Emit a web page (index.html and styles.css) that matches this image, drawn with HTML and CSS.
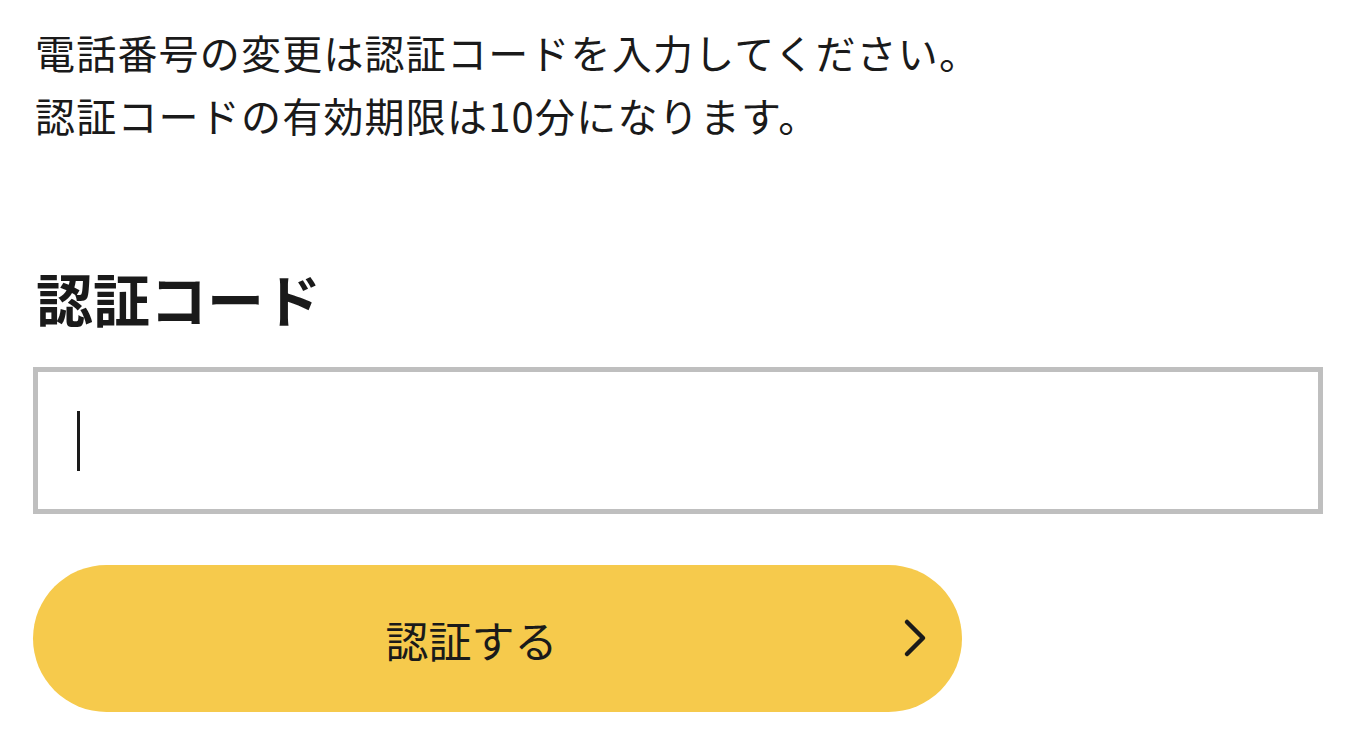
FILE: index.html
```html
<!DOCTYPE html>
<html lang="ja">
<head>
<meta charset="utf-8">
<link rel="stylesheet" href="styles.css">
</head>
<body>
<main class="page">
  <p class="lead">電話番号の変更は認証コードを入力してください。<br>認証コードの有効期限は10分になります。</p>
  <h2 class="label">認証コード</h2>
  <div class="field"><span class="caret"></span></div>
  <button class="submit" type="button">
    <span class="submit-text">認証する</span>
    <svg class="chev" width="28" height="40" viewBox="0 0 28 40"><path d="M6 4 L22 20 L6 36" fill="none" stroke="#1a1a1a" stroke-width="4.5" stroke-linecap="round" stroke-linejoin="round"/></svg>
  </button>
</main>
</body>
</html>
```
FILE: styles.css
```css
html, body { margin: 0; padding: 0; background: #fff; }
body {
  font-family: "Noto Sans CJK JP", "Noto Sans", sans-serif;
  color: #1a1a1a;
}
.page {
  padding: 21px 33px 0 33px;
  display: flex;
  flex-direction: column;
  align-items: flex-start;
}
.lead {
  margin: 0 0 0 2px;
  font-size: 40px;
  line-height: 63px;
  letter-spacing: 1.2px;
}
.label {
  margin: 110px 0 0 3px;
  font-size: 57px;
  font-weight: 700;
  line-height: 80px;
}
.field {
  margin-top: 30px;
  box-sizing: border-box;
  width: 1290px;
  height: 147px;
  border: 5px solid #bfbfbf;
  display: flex;
  align-items: center;
  padding-left: 39px;
}
.caret {
  width: 3px;
  height: 60px;
  background: #1a1a1a;
}
.submit {
  margin-top: 51px;
  width: 929px;
  height: 147px;
  border: none;
  border-radius: 74px;
  background: #f6ca4c;
  position: relative;
  display: flex;
  align-items: center;
  justify-content: center;
  font-family: inherit;
  color: #1a1a1a;
  padding: 0;
}
.submit-text {
  font-size: 43px;
  margin-right: 52px;
}
.chev {
  position: absolute;
  right: 33px;
  top: 53px;
}
```
